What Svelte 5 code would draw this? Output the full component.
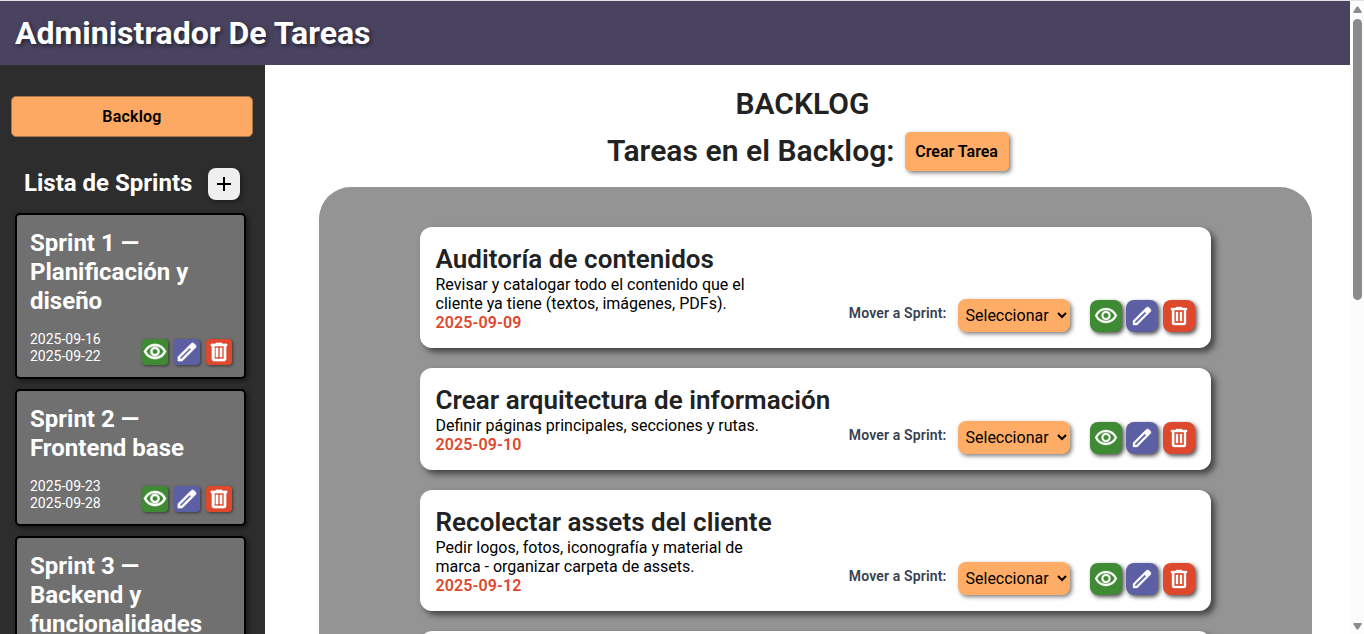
<script>
  const sprints = [
    { name: 'Sprint 1 — Planificación y diseño', start: '2025-09-16', end: '2025-09-22' },
    { name: 'Sprint 2 — Frontend base', start: '2025-09-23', end: '2025-09-28' },
    { name: 'Sprint 3 — Backend y funcionalidades', start: '', end: '' }
  ];
  const tasks = [
    { title: 'Auditoría de contenidos', text: 'Revisar y catalogar todo el contenido que el cliente ya tiene (textos, imágenes, PDFs).', date: '2025-09-09' },
    { title: 'Crear arquitectura de información', text: 'Definir páginas principales, secciones y rutas.', date: '2025-09-10' },
    { title: 'Recolectar assets del cliente', text: 'Pedir logos, fotos, iconografía y material de marca - organizar carpeta de assets.', date: '2025-09-12' },
    { title: '', text: '', date: '' }
  ];
  const actions = [
    { kind: 'view', path: 'M480-320q75 0 127.5-52.5T660-500q0-75-52.5-127.5T480-680q-75 0-127.5 52.5T300-500q0 75 52.5 127.5T480-320Zm0-72q-45 0-76.5-31.5T372-500q0-45 31.5-76.5T480-608q45 0 76.5 31.5T588-500q0 45-31.5 76.5T480-392Zm0 192q-146 0-266-81.5T40-500q54-137 174-218.5T480-800q146 0 266 81.5T920-500q-54 137-174 218.5T480-200Zm0-300Zm0 220q113 0 207.5-59.5T832-500q-50-101-144.5-160.5T480-720q-113 0-207.5 59.5T128-500q50 101 144.5 160.5T480-280Z' },
    { kind: 'edit', path: 'M200-200h57l391-391-57-57-391 391v57Zm-80 80v-170l528-527q12-11 26.5-17t30.5-6q16 0 31 6t26 18l55 56q12 11 17.5 26t5.5 30q0 16-5.5 30.5T817-647L290-120H120Z' },
    { kind: 'delete', path: 'M280-120q-33 0-56.5-23.5T200-200v-520h-40v-80h200v-40h240v40h200v80h-40v520q0 33-23.5 56.5T680-120H280Zm400-600H280v520h400v-520ZM360-280h80v-360h-80v360Zm160 0h80v-360h-80v360ZM280-720v520-520Z' }
  ];
</script>

{#snippet buttons()}
  <div class="actions">
    {#each actions as a}
      <button class="act {a.kind}">
        <svg viewBox="0 -960 960 960" width="24" height="24" fill="#fff"><path d={a.path} /></svg>
      </button>
    {/each}
  </div>
{/snippet}

<div class="page">
  <div class="window">
    <header><h1>Administrador De Tareas</h1></header>
    <div class="body">
      <aside>
        <button class="backlog">Backlog</button>
        <div class="list-head">
          <h2>Lista de Sprints</h2>
          <button class="add">
            <svg viewBox="0 -960 960 960" width="24" height="24"><path d="M440-440H200v-80h240v-240h80v240h240v80H520v240h-80v-240Z" /></svg>
          </button>
        </div>
        <div class="sprints">
          {#each sprints as s}
            <article class="sprint">
              <h3>{s.name}</h3>
              <div class="foot">
                <div class="dates"><span>{s.start}</span><span>{s.end}</span></div>
                {@render buttons()}
              </div>
            </article>
          {/each}
        </div>
      </aside>
      <main>
        <h2 class="heading">BACKLOG</h2>
        <div class="sub">
          <h2>Tareas en el Backlog:</h2>
          <button class="create">Crear Tarea</button>
        </div>
        <section class="panel">
          {#each tasks as t}
            <article class="task">
              <div class="info">
                <h3>{t.title}</h3>
                <p>{t.text}</p>
                <b>{t.date}</b>
              </div>
              {#if t.title}
                <div class="controls">
                  <span class="label">Mover a Sprint:</span>
                  <select><option>Seleccionar</option></select>
                  {@render buttons()}
                </div>
              {/if}
            </article>
          {/each}
        </section>
      </main>
    </div>
  </div>
  <div class="scroll">
    <svg width="9" height="7" viewBox="0 0 9 7"><path d="M3.6 .8Q4.5 0 5.4 .8L8.8 6Q9 7 8 7H1Q0 7 .2 6Z" /></svg>
    <div class="track"><div class="thumb"></div></div>
    <svg width="9" height="7" viewBox="0 0 9 7"><path d="M3.6 6.2Q4.5 7 5.4 6.2L8.8 1Q9 0 8 0H1Q0 0 .2 1Z" /></svg>
  </div>
</div>

<style>
  .page {
    box-sizing: border-box;
    display: flex;
    width: 1364px;
    height: 634px;
    overflow: hidden;
    border-top: 1px solid #e5e1e2;
    background: #fff;
    font-family: Roboto, sans-serif;
    font-size: 16px;
  }
  .page * { box-sizing: border-box; }
  h1, h2, h3, p { margin: 0; }
  button, select { font-family: inherit; border: 0; padding: 0; }
  svg { display: block; }
  .window { width: 1350px; height: 633px; overflow: hidden; }
  header {
    display: flex;
    align-items: center;
    height: 64px;
    padding-left: 15px;
    background: #494360;
  }
  h1 { color: #fff; font-size: 32px; line-height: 38px; text-shadow: 2px 2px 4px rgba(0, 0, 0, .5); }
  .body { display: flex; height: 569px; }
  aside { width: 265px; height: 569px; overflow: hidden; background: #2d2d2d; color: #fff; padding-top: 31px; }
  .backlog {
    display: block;
    width: 242px;
    height: 41px;
    margin-left: 11px;
    border: 1px solid #a87448;
    border-radius: 5px;
    background: #fda863;
    color: #000;
    font-size: 16px;
    font-weight: 600;
    letter-spacing: .2px;
  }
  .list-head { display: flex; align-items: center; gap: 16px; height: 32px; margin: 31px 0 13px 24px; }
  .list-head h2 { font-size: 24px; line-height: 29px; margin-top: -1px; }
  .add {
    display: grid;
    place-items: center;
    width: 32px;
    height: 32px;
    border-radius: 8px;
    background: #efefef;
    box-shadow: 2px 2px 5px rgba(0, 0, 0, .4);
  }
  .sprints { display: flex; flex-direction: column; gap: 10px; padding-left: 15px; }
  .sprint {
    flex: none;
    width: 231px;
    padding: 14px 12.5px 12px 13px;
    border: 2px solid #000;
    border-radius: 5px;
    background: #707070;
    box-shadow: 2px 2px 5px rgba(0, 0, 0, .5);
  }
  .sprint h3 { font-size: 24px; line-height: 29px; }
  .foot { display: flex; justify-content: space-between; align-items: flex-end; margin-top: 15px; }
  .dates { display: flex; flex-direction: column; font-size: 14px; line-height: 17px; }
  .actions { display: flex; gap: 4.5px; }
  .act { display: grid; place-items: center; width: 32px; height: 32px; border-radius: 8px; box-shadow: 2px 2px 4px rgba(0, 0, 0, .7); }
  .act path { stroke: #fff; stroke-width: 14; }
  .sprint .actions { gap: 6px; }
  .sprint .act { width: 26px; height: 26px; border-radius: 4px; box-shadow: 1px 1px 3px rgba(0, 0, 0, .5); }
  .sprint .act path { stroke-width: 28; }
  .view { background: #3f8b33; }
  .edit { background: #5d5fa4; }
  .delete { background: #de482d; }
  main { width: 1085px; padding-top: 20px; color: #222; }
  .heading { width: 1075px; text-align: center; font-size: 30px; line-height: 36px; font-weight: 600; letter-spacing: .05px; padding-top: 1px; margin-bottom: -1px; }
  .sub { display: flex; align-items: center; gap: 10px; height: 40px; margin: 11px 0 15px 342px; }
  .sub h2 { font-size: 30px; line-height: 36px; font-weight: 600; margin-top: -3px; letter-spacing: .05px; }
  .create {
    width: 104px;
    height: 39px;
    margin-top: -1px;
    border-radius: 5px;
    background: #ffad66;
    color: #000;
    font-size: 16px;
    font-weight: 600;
    box-shadow: 2px 2px 4px rgba(0, 0, 0, .5);
  }
  .panel {
    display: flex;
    flex-direction: column;
    gap: 20px;
    width: 993px;
    height: 600px;
    margin-left: 54px;
    padding: 40px 101px;
    border-radius: 32px;
    background: #949494;
  }
  .task {
    flex: none;
    display: flex;
    justify-content: space-between;
    align-items: flex-end;
    width: 791px;
    min-height: 102px;
    padding: 16px 16px 16px 15.5px;
    border-radius: 12px;
    background: #fff;
    box-shadow: 4px 4px 6px rgba(0, 0, 0, .55);
  }
  .info { display: flex; flex-direction: column; width: 400px; }
  .info h3 { font-size: 26px; line-height: 32px; font-weight: 600; white-space: nowrap; letter-spacing: .04px; }
  .info p { width: 330px; line-height: 19px; color: #000; }
  .info b { line-height: 19px; font-weight: 600; color: #de482d; letter-spacing: .12px; }
  .controls { display: flex; align-items: center; }
  .label { margin: -5px 11px 0 0; font-size: 14px; font-weight: 600; color: #374151; letter-spacing: .15px; }
  select {
    width: 112px;
    height: 33px;
    margin-right: 20px;
    padding-left: 4px;
    border-radius: 8px;
    background: #ffad66;
    color: #000;
    font-size: 16px;
    box-shadow: 2px 2px 4px rgba(0, 0, 0, .5);
  }
  .controls .actions { padding-right: .5px; }
  .scroll { display: flex; flex-direction: column; align-items: center; width: 14px; height: 633px; padding: 5px 0 4px; background: #fcfcfc; }
  .scroll svg { fill: #8b8b8b; }
  .track { flex: 1; padding-top: 6px; }
  .thumb { width: 9px; height: 281px; border-radius: 5px; background: #8b8b8b; }
</style>
